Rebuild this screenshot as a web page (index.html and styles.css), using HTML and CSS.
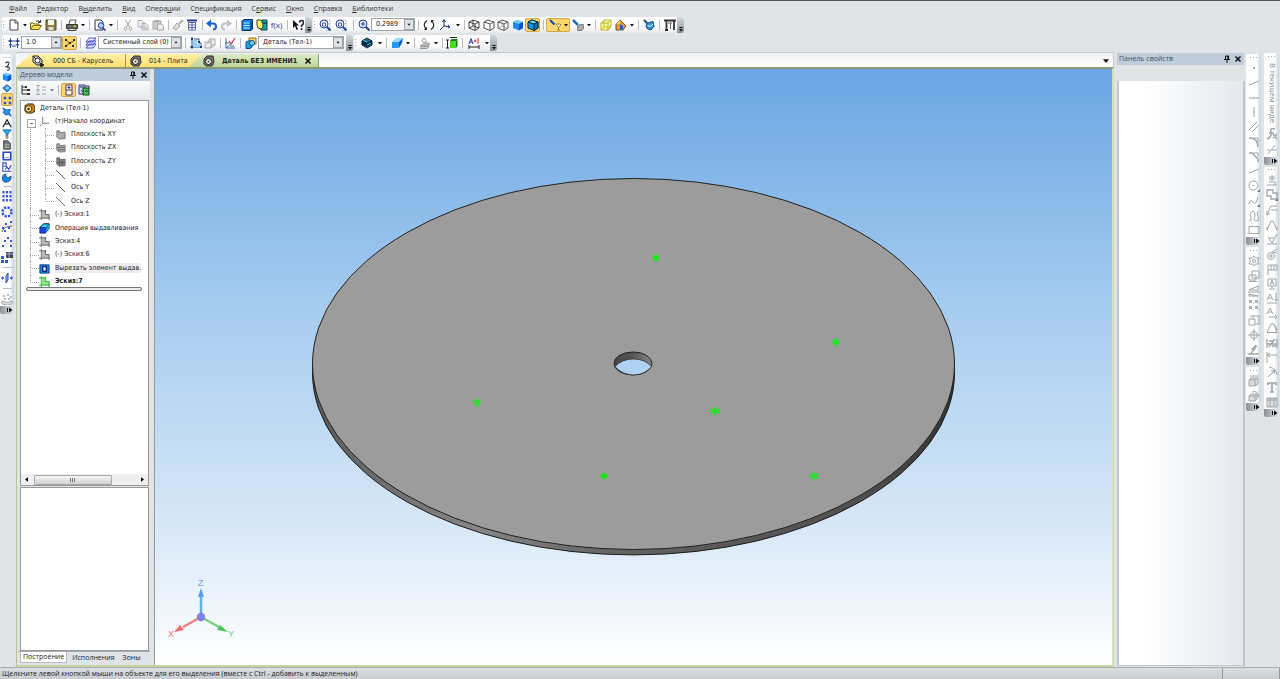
FILE: index.html
```html
<!DOCTYPE html>
<html lang="ru">
<head>
<meta charset="utf-8">
<title>Деталь БЕЗ ИМЕНИ1</title>
<link rel="stylesheet" href="styles.css">
</head>
<body>
<svg class="sprite" aria-hidden="true">
<defs>
<linearGradient id="rim" x1="0" x2="1" y1="0" y2="0"><stop offset="0" stop-color="#5a5a5a"/><stop offset=".25" stop-color="#868686"/><stop offset=".5" stop-color="#606060"/><stop offset=".85" stop-color="#505050"/><stop offset="1" stop-color="#333"/></linearGradient>
<linearGradient id="bore" x1="0" x2="1" y1="0" y2="0"><stop offset="0" stop-color="#444"/><stop offset=".5" stop-color="#565656"/><stop offset="1" stop-color="#888"/></linearGradient>
</defs>
<symbol id="caret" viewBox="0 0 6 12"><path d="M1 5h4L3 7.500z" fill="#111"/></symbol>
<symbol id="over" viewBox="0 0 6 16"><path d="M1.500 10.500h3" stroke="#111"/><path d="M1 12h4L3 14.500z" fill="#111"/></symbol>
<symbol id="overh" viewBox="0 0 14 8"><path d="M7.500 2v4" stroke="#111"/><path d="M9 1.500v5L12.500 4z" fill="#111"/></symbol>
<symbol id="new" viewBox="0 0 12 12"><path d="M2 1h5.500L10 3.500V11H2z" fill="#fff" stroke="#444"/><path d="M7 1v3h3" fill="none" stroke="#444"/></symbol>
<symbol id="open" viewBox="0 0 12 12"><path d="M.5 10V4h3l1 1H9v1.500" fill="#ffe873" stroke="#776a13"/><path d="M.5 10.500l2.500-4h8.500L9 10.500z" fill="#f8df55" stroke="#776a13"/><path d="M6 2.500q2-2 4 .5M10.500 1v2.500H8" fill="none" stroke="#333"/></symbol>
<symbol id="save" viewBox="0 0 12 12"><path d="M1 1h10v10H1z" fill="#92803c" stroke="#51471f"/><path d="M3 1h6v5H3z" fill="#f6f3e8"/><path d="M3.500 8h5v3h-5z" fill="#ddd"/></symbol>
<symbol id="print" viewBox="0 0 12 12"><path d="M3 5l1-4h6L9 5" fill="#fff" stroke="#555"/><path d="M.5 5.500h11v4H.500z" fill="#6d6c5d" stroke="#333"/><path d="M2 9.500h8v2H2z" fill="#ddd" stroke="#444"/><path d="M8 7h2" stroke="#ff0"/></symbol>
<symbol id="preview" viewBox="0 0 12 12"><path d="M1 1h6l2 2v8H1z" fill="#fff" stroke="#334"/><circle cx="7" cy="6.500" r="2.800" fill="#a8d2ff" stroke="#1c3ca5"/><path d="M9 9l2.500 2.500" stroke="#1c3ca5" stroke-width="1.500"/></symbol>
<symbol id="cut" viewBox="0 0 12 12"><path d="M3.500 1l4 7M8.500 1l-4 7" stroke="#a6a8aa"/><circle cx="3.500" cy="9.500" r="1.500" fill="none" stroke="#a6a8aa"/><circle cx="8.500" cy="9.500" r="1.500" fill="none" stroke="#a6a8aa"/></symbol>
<symbol id="copy" viewBox="0 0 12 12"><path d="M1 1.500h4l2 2V8H1zM5 4.500h4l2 2V11H5z" fill="#eee" stroke="#adafb1"/><path d="M6.500 8h3M6.500 9.500h3" stroke="#bbb"/></symbol>
<symbol id="paste" viewBox="0 0 12 12"><path d="M1 2h8v8H1z" fill="#ccc" stroke="#a6a8aa"/><path d="M3 1h4v2H3z" fill="#aaa"/><path d="M5.500 5h4l2 2v4h-6z" fill="#eee" stroke="#a6a8aa"/></symbol>
<symbol id="brush" viewBox="0 0 12 12"><path d="M11 1L7 5" stroke="#a6a8aa" stroke-width="2"/><path d="M5 4l3 3-4 4-3-2z" fill="#ddd" stroke="#a6a8aa"/></symbol>
<symbol id="props" viewBox="0 0 12 12"><path d="M1 1.500h10" stroke="#273ba5" stroke-width="2"/><path d="M2.500 3.500h7V11h-7z" fill="#fff" stroke="#5262b5"/><path d="M3 6h6M3 8.500h6M6 4v7" stroke="#5262b5"/></symbol>
<symbol id="undo" viewBox="0 0 12 12"><path d="M3 4.500h4q3 0 3 3t-3 3" fill="none" stroke="#1d5fd6" stroke-width="2"/><path d="M0 4.500L5 .5v8z" fill="#1d5fd6"/></symbol>
<symbol id="redo" viewBox="0 0 12 12"><path d="M9 4.500H5q-3 0-3 3t3 3" fill="none" stroke="#bfc1c4" stroke-width="2"/><path d="M12 4.500L7 .5v8z" fill="#bfc1c4"/></symbol>
<symbol id="calc" viewBox="0 0 12 12"><path d="M1 2l2-1.500h8.500V10L10 11.500H1z" fill="#1182e8" stroke="#062a66"/><path d="M2.500 4h6M2.500 6.500h6M2.500 9h6" stroke="#b8f0ff"/><path d="M10 2.500V11" stroke="#062a66"/></symbol>
<symbol id="lib" viewBox="0 0 12 12"><path d="M5 4h6v7H5z" fill="#15a8ad" stroke="#063f4b"/><path d="M1 1h4l2 2v4q0 3-2 3-4 0-4-4z" fill="#fff36b" stroke="#3e3a0c"/><path d="M6 1h5v3H6z" fill="#15a8ad" stroke="#063f4b"/></symbol>
<symbol id="help" viewBox="0 0 12 12"><path d="M1 1v8l2-2 1.500 4 1.500-.7L4.500 6.500H7z" fill="#111"/><path d="M7.500 3.500q0-2 2-2t2 2-2 3v1.500M9.500 9v2" fill="none" stroke="#224" stroke-width="1.500"/></symbol>
<symbol id="zoomall" viewBox="0 0 12 12"><path d="M6 1h5v10H6" fill="#fff" stroke="#999" stroke-dasharray="1"/><circle cx="5" cy="5" r="4" fill="#e2eefd" stroke="#23409c"/><path d="M3.500 4h3v3h-3z" fill="#fff" stroke="#23409c" stroke-width=".800"/><path d="M8 8l3.500 3.500" stroke="#23409c" stroke-width="2"/></symbol>
<symbol id="zoom" viewBox="0 0 12 12"><circle cx="5" cy="5" r="4" fill="#e2eefd" stroke="#23409c"/><path d="M3 5h4M5 3v4" stroke="#23409c"/><path d="M8 8l3.500 3.500" stroke="#23409c" stroke-width="2"/></symbol>
<symbol id="rotate" viewBox="0 0 12 12"><path d="M4 1.500Q-1 5 3 10M8 10.500Q13 7 9 2" fill="none" stroke="#222" stroke-width="1.200"/><path d="M4 11H1l3-3zM8 1h3L8 4z" fill="#222"/></symbol>
<symbol id="axes" viewBox="0 0 12 12"><path d="M5 7V1M5 7l6 1M5 7l-4 4M3.500 3L5 .5 6.500 3M9 6l2 2-2 1" fill="none" stroke="#26337a"/></symbol>
<symbol id="wire" viewBox="0 0 12 12"><path d="M1 3l4-2 6 2v6l-4 2.500L1 9zM1 3l6 2 4-2M7 5v6M5 1v6l6 2M5 7L1 9" fill="none" stroke="#333" stroke-width=".900"/></symbol>
<symbol id="hollow" viewBox="0 0 12 12"><path d="M1 3l4-2 6 2v6l-4 2.500L1 9zM1 3l6 2 4-2M7 5v6" fill="#fff" stroke="#444" stroke-width=".900"/></symbol>
<symbol id="thin" viewBox="0 0 12 12"><path d="M1 3l4-2 6 2v6l-4 2.500L1 9zM1 3l6 2 4-2M7 5v6" fill="#fff" stroke="#444" stroke-width=".900"/><path d="M5 2v5l5 2M5 7L1 9" fill="none" stroke="#888" stroke-width=".700"/></symbol>
<symbol id="solid" viewBox="0 0 12 12"><path d="M1 3l4-2 6 2v6l-4 2.500L1 9z" fill="#1b8cf0"/><path d="M1 3l4-2 6 2-4 2z" fill="#74c8ff"/><path d="M7 5l4-2v6l-4 2.500z" fill="#0c56c8"/></symbol>
<symbol id="solidb" viewBox="0 0 12 12"><path d="M1 3l4-2 6 2v6l-4 2.500L1 9z" fill="#1796dc" stroke="#062b42"/><path d="M1 3l4-2 6 2-4 2z" fill="#74d9f5" stroke="#062b42"/><path d="M7 5l4-2v6l-4 2.500z" fill="#0873b8" stroke="#062b42"/></symbol>
<symbol id="filter" viewBox="0 0 12 12"><path d="M1 1l4.500 4.500" stroke="#234b99" stroke-width="2.200"/><path d="M7.500 5h4v1.500L9.500 8.500l-2-2zM9.500 8v3M8 11h3" fill="#fff3b0" stroke="#866e38" stroke-width=".800"/></symbol>
<symbol id="pick" viewBox="0 0 12 12"><path d="M1 1l5 5" stroke="#246bc4" stroke-width="2.500"/><path d="M5.500 7l2-1.500H11.500v4L10 11.500H5.500z" fill="#aaa" stroke="#888"/></symbol>
<symbol id="ybox" viewBox="0 0 12 12"><path d="M1 4l3-3h7v7l-3 3H1zM1 4h7v7M8 4l3-3M4 1v7h7M4 8l-3 3" fill="#fdfda0" stroke="#b8b91c"/></symbol>
<symbol id="section" viewBox="0 0 12 12"><path d="M1 11V5l4-4 6 6-3 4z" fill="#ef982a" stroke="#775019"/><path d="M5 5l3 2v3l-3 1z" fill="#2258d6"/><path d="M1 5l4-4v4z" fill="#ffd46b"/></symbol>
<symbol id="rebuild" viewBox="0 0 12 12"><path d="M1 1l4 4" stroke="#1c4c81" stroke-width="2"/><path d="M3 6l3-2.500 4-1 1 5-3 3.500-4-1.500z" fill="#2898e1" stroke="#1c4c81"/><path d="M4.500 6.500l2.500 1 3-2.500" fill="none" stroke="#e9f8ff"/></symbol>
<symbol id="crane" viewBox="0 0 12 12"><path d="M0 1.500h12M2.500 2v9M1 11h3M10 2v9" fill="none" stroke="#333" stroke-width="1.800"/><path d="M4 4h4M6.500 4v6" fill="none" stroke="#666"/></symbol>
<symbol id="snap" viewBox="0 0 12 12"><path d="M2.500 1v10M9.500 1v10M0 4h12M4 9h4M1 7l1.500 2L4 7M8 7l1.500 2L11 7" fill="none" stroke="#3053a0"/><path d="M1.500 3h2v2h-2zM8.500 3h2v2h-2z" fill="#26337a"/></symbol>
<symbol id="points" viewBox="0 0 12 12"><path d="M1 9.500l5-3.500 5-3M2 3l3 2.500" stroke="#7b5d12"/><path d="M1 2h2v2H1zM5 5h2v2H5zM9 2h2v2H9zM8 8h2v2H8zM1 8h2v2H1z" fill="#30301b"/></symbol>
<symbol id="layers" viewBox="0 0 12 12"><path d="M1 11l3-4h7l-3 4zM1 8l3-4h7L8 8zM1 5l3-4h7L8 5z" fill="#e8eaff" stroke="#4a50cb"/></symbol>
<symbol id="sketch" viewBox="0 0 12 12"><path d="M2 0v12M0 10h12M4 2h5v4h2v4" fill="none" stroke="#1c539c"/><path d="M3 3h4v4h4v3H3z" fill="#9bd3ef"/><path d="M1 1h2v2H1zM8 4h2v2H8zM1 9h2v2H1zM10 9h2v2h-2z" fill="#143b7c"/></symbol>
<symbol id="gsketch" viewBox="0 0 12 12"><path d="M1 5h6v6H1zM5 2h6v6H7M4 5l2-3M7 11l4-3M3 7l5-4" fill="#eee" stroke="#a6a8aa"/></symbol>
<symbol id="check" viewBox="0 0 12 12"><path d="M2 1v10h9M2 11l7-6" fill="none" stroke="#4361bd"/><path d="M5 4l2 3 4-6" fill="none" stroke="#d03b74" stroke-width="1.300"/><path d="M1 6h4M6 9h4" stroke="#268a4b"/></symbol>
<symbol id="assembly" viewBox="0 0 12 12"><path d="M4 1h7v6H4z" fill="#ffd65c" stroke="#9a681a"/><path d="M1 5l2-1h4v6l-2 1.500H1z" fill="#229fe3" stroke="#07508b"/><circle cx="7" cy="6" r="2.500" fill="#79d7f0" stroke="#07508b"/></symbol>
<symbol id="stripe" viewBox="0 0 12 12"><path d="M1 4l5-3 5 3v4l-5 3-5-3z" fill="#176b89" stroke="#062641"/><path d="M1 4l5 3 5-3M1 6l5 3 5-3" fill="none" stroke="#111b42" stroke-width="1.500"/><path d="M2 3l4 2M6 8l4-2" stroke="#30d0d0"/></symbol>
<symbol id="extr" viewBox="0 0 12 12"><path d="M1 5h7v6H1z" fill="#2898f2"/><path d="M1 5l4-4h7L8 5z" fill="#9ad9ff"/><path d="M8 5l4-4-1 5-3 5z" fill="#0a5fc0"/></symbol>
<symbol id="gsurf" viewBox="0 0 12 12"><circle cx="5" cy="3.500" r="2" fill="none" stroke="#999"/><path d="M5 6h5M1 9l3-2h7l-2 2zM1 11.500l2-2h7l-2 2z" fill="#ccc" stroke="#999"/></symbol>
<symbol id="dimbox" viewBox="0 0 12 12"><path d="M4 4h6v7H4z" fill="#3fe010"/><path d="M10 4l1.500-2v7L10 11z" fill="#1a7a08"/><path d="M4 4l1.500-2h6L10 4z" fill="#1a7a08"/><path d="M1.500 3v8M0 3h3M0 11h3M4 .5h7" stroke="#222"/></symbol>
<symbol id="measure" viewBox="0 0 12 12"><path d="M1 7l2-5.500L5 7M2 5h2" fill="none" stroke="#203fba"/><path d="M6 4h2.500M7 2.500v3M10 1v6" stroke="#e63030"/><path d="M1 8v4M11 8v4M1 10h10" stroke="#222"/></symbol>
<symbol id="gear" viewBox="0 0 12 12"><path d="M1 4l3-3h6l1 6-2 4H3L1 9z" fill="#77756d" stroke="#2e2e2a"/><circle cx="5.500" cy="6.500" r="3" fill="#f4f2e4" stroke="#222"/><circle cx="5.500" cy="6.500" r="1" fill="#444"/></symbol>
<symbol id="ygear" viewBox="0 0 12 12"><path d="M1 3l3-2h6l2 3v5l-3 2H3L1 9z" fill="#bb842c" stroke="#3b270c"/><circle cx="5" cy="6.500" r="3.500" fill="#ffe18c" stroke="#4f3511"/><circle cx="5" cy="6.500" r="1.300" fill="#3a2b14"/></symbol>
<symbol id="asm" viewBox="0 0 12 12"><path d="M1 1h5l4 4v5H5L1 7z" fill="#ddd" stroke="#222"/><circle cx="5.500" cy="5.500" r="2.500" fill="#fff" stroke="#222"/><path d="M8 8l4 2-3 2zM1 1l3 3" fill="#222" stroke="#222"/></symbol>
<symbol id="pin" viewBox="0 0 8 8"><path d="M2.500 1h3v3.500h-3zM1 4.500h6M4 5v3" fill="none" stroke="#111"/><path d="M5 1v4" stroke="#111" stroke-width="1.500"/></symbol>
<symbol id="close" viewBox="0 0 8 8"><path d="M1.500 1.500l5 5M6.500 1.500l-5 5" stroke="#111" stroke-width="1.500"/></symbol>
<symbol id="tree" viewBox="0 0 12 12"><path d="M2 1v9h5M2 3h3M2 6h5" fill="none" stroke="#333"/><path d="M5 2h2v2H5zM7 5h3v2H7zM7 9h3v2H7z" fill="#333"/></symbol>
<symbol id="gtree" viewBox="0 0 12 12"><path d="M1 1.500h4M1 6h4M1 10.500h4M7 3h4M7 6h4M7 10h4M3 2v9" stroke="#aaa"/></symbol>
<symbol id="doc" viewBox="0 0 12 12"><path d="M3 1h6v10H3z" fill="#fff6c8" stroke="#443c9b"/><path d="M3 6h6M5 3h2v1H5z" fill="#443c9b" stroke="#443c9b"/></symbol>
<symbol id="docs" viewBox="0 0 12 12"><path d="M1 1h6v9H1z" fill="#d0d8ff" stroke="#223b8b"/><path d="M5 4h6v7H5z" fill="#46bd4d" stroke="#173d2a"/><path d="M2 3h4M7 2h4v2M3 6l2 2M7 7h3" fill="none" stroke="#173d2a"/></symbol>
<symbol id="origin" viewBox="0 0 12 12"><path d="M4 1v7h7M4 8l-3 3" fill="none" stroke="#777"/></symbol>
<symbol id="plane" viewBox="0 0 12 12"><path d="M2 2h3v2l6-.5v7l-6 .5-3-2z" fill="#aaa" stroke="#777"/></symbol>
<symbol id="planeh" viewBox="0 0 12 12"><path d="M2 2h3v2l6-.5v7l-6 .5-3-2z" fill="#aaa" stroke="#777"/><path d="M2 6h9M3 8.500h8" stroke="#666"/></symbol>
<symbol id="planev" viewBox="0 0 12 12"><path d="M2 2h3v2l6-.5v7l-6 .5-3-2z" fill="#888" stroke="#666"/><path d="M5 3v8M8 4v7M2 7h9" stroke="#555"/></symbol>
<symbol id="axis" viewBox="0 0 12 12"><path d="M1 1l10 10" stroke="#555"/></symbol>
<symbol id="tsk" viewBox="0 0 12 12"><path d="M3 2h4v4h4v4H3z" fill="#b8b8b8"/><path d="M2.500 0v12M0 2h8M7 1v5h4v6M0 10h12" fill="none" stroke="#666"/></symbol>
<symbol id="tskg" viewBox="0 0 12 12"><path d="M3 2h4v4h4v4H3z" fill="#8eea84"/><path d="M2.500 0v12M0 2h8M7 1v5h4v6M0 10h12" fill="none" stroke="#30a33a"/></symbol>
<symbol id="boss" viewBox="0 0 12 12"><path d="M1 5l4-4h6v5l-4 5H1z" fill="#1c48df" stroke="#0b2a76"/><path d="M1 5l4-4h6L8 5z" fill="#35d8ea" stroke="#0b2a76"/><path d="M8 5l3-4v5l-3 4z" fill="#0fa9d0"/></symbol>
<symbol id="cutx" viewBox="0 0 12 12"><path d="M1 2h10v9H1z" fill="#158ee6" stroke="#0a2d86"/><path d="M4 4h4v5H4z" fill="#e8f8ff" stroke="#0a2d86" stroke-width="1.500"/></symbol>
<symbol id="curve" viewBox="0 0 12 12"><path d="M4 2q6-2 4 2T5 7q6 0 3 4H6" fill="none" stroke="#333" stroke-width="1.300"/></symbol>
<symbol id="patch" viewBox="0 0 12 12"><path d="M1 6l5-4 5 4-5 5z" fill="#2f8df0" stroke="#1851a7"/><path d="M4 6l3-2 2 2-3 2z" fill="#9ad6ff"/></symbol>
<symbol id="four" viewBox="0 0 12 12"><path d="M2 2h3v3H2zM8 2h3v3H8zM2 8h3v3H2zM8 8h3v3H8z" fill="#294ed0"/></symbol>
<symbol id="fly" viewBox="0 0 12 12"><path d="M1 1l4 2.500 5-.5-1 4 2 4-3-2-4 .5L1 6l2-1z" fill="#2696ee" stroke="#1b57b1"/></symbol>
<symbol id="compass" viewBox="0 0 12 12"><path d="M1 11l5-9 5 9M4 7h4" fill="none" stroke="#222" stroke-width="1.400"/></symbol>
<symbol id="funnel" viewBox="0 0 12 12"><path d="M1 1h10L7 6v5H5V6z" fill="#21aaf2" stroke="#1c69b1"/><path d="M5 8h2v3H5z" fill="#ff8a1f"/></symbol>
<symbol id="sheet" viewBox="0 0 12 12"><path d="M2 1h5l3 3v7H2z" fill="#777" stroke="#333"/><path d="M3 6h6M3 9h6" stroke="#ccc"/></symbol>
<symbol id="frame" viewBox="0 0 12 12"><path d="M1.500 1.500h9v9h-9z" fill="#fff" stroke="#2948bc" stroke-width="2"/><path d="M3 8h6" stroke="#78a"/></symbol>
<symbol id="graph" viewBox="0 0 12 12"><path d="M1 1h4v4H1zM1 6v5h10M4 9l2-3 2 3 3-5" fill="none" stroke="#2948bc" stroke-width="1.300"/></symbol>
<symbol id="blob" viewBox="0 0 12 12"><path d="M1 3l3-2 2 5 5-2q0 7-6 7T1 3z" fill="#1886e1" stroke="#17418a"/></symbol>
<symbol id="grid9" viewBox="0 0 12 12"><path d="M2.500 0v12M6 0v12M9.500 0v12" stroke="#3358e0" stroke-width="2.200" stroke-dasharray="2.500 1.500"/></symbol>
<symbol id="ring" viewBox="0 0 12 12"><circle cx="6" cy="6" r="4.500" fill="none" stroke="#3358e0" stroke-width="2.400" stroke-dasharray="2.300 1.230"/></symbol>
<symbol id="path3" viewBox="0 0 12 12"><path d="M1 11q2-6 10-6" fill="none" stroke="#555"/><path d="M1 6h2v2H1zM4 2h2v2H4zM9 0h2v2H9zM3 9h2v2H3zM7 6h2v2H7z" fill="#3358e0"/></symbol>
<symbol id="scatter" viewBox="0 0 12 12"><path d="M1 9h2v2H1zM3 4h2v2H3zM6 1h2v2H6zM9 4h2v2H9zM9 9h2v2H9z" fill="#3358e0"/></symbol>
<symbol id="tabpat" viewBox="0 0 12 12"><path d="M5 1h7v6H5z" fill="#446"/><path d="M5 3h7M8 1v6" stroke="#aac"/><path d="M0 5h3v3H0zM0 9h3v3H0zM4 9h3v3H4z" fill="#3358e0"/></symbol>
<symbol id="mirror" viewBox="0 0 12 12"><path d="M5 4l2-3v7l-2 3z" fill="#8fc0ff" stroke="#2948bc"/><path d="M1 6h2M9 6h2" stroke="#3358e0" stroke-width="1.500"/><path d="M2 4v4L0 6zM10 4v4l2-2z" fill="#3358e0"/></symbol>
<symbol id="gdots" viewBox="0 0 12 12"><path d="M1 8q5 3 10 0v3q-5 2-10 0z" fill="#ddd" stroke="#aaa"/><path d="M2 2h2v2H2zM6 1h2v2H6zM9 3h2v2H9zM3 5h2v2H3zM7 5h2v2H7z" fill="#bbb"/></symbol>
<symbol id="g-dot" viewBox="0 0 12 12"><path d="M5 5h2v2H5z" fill="#aaa" stroke="none"/></symbol>
<symbol id="g-line" viewBox="0 0 12 12"><path d="M1 8l10-4"/></symbol>
<symbol id="g-h" viewBox="0 0 12 12"><path d="M1 6h10M6 5v2"/></symbol>
<symbol id="g-v" viewBox="0 0 12 12"><path d="M6 1v10M5 6h2"/></symbol>
<symbol id="g-par" viewBox="0 0 12 12"><path d="M1 9l8-8M4 11l7-7"/></symbol>
<symbol id="g-arc" viewBox="0 0 12 12"><path d="M1 2q9 0 9 9" stroke-width="1.500"/><path d="M5 2h5v4"/></symbol>
<symbol id="g-cham" viewBox="0 0 12 12"><path d="M1 2h3l6 6v3" stroke-width="1.500"/><path d="M5 2h5v4"/></symbol>
<symbol id="g-circ" viewBox="0 0 12 12"><circle cx="5.500" cy="5.500" r="4.500"/><path d="M4.500 5.500h2"/><path d="M12 9v3H9z" fill="#777" stroke="none"/></symbol>
<symbol id="g-spl" viewBox="0 0 12 12"><path d="M1 9q1-6 4-2t5-5"/><path d="M12 9v3H9z" fill="#777" stroke="none"/></symbol>
<symbol id="g-loop" viewBox="0 0 12 12"><path d="M1 10.500q3 0 2-3t0-5q2.500-3 3.500 0 1 3 0 5t1 3.500q3 .5 3-2t-1-4 1-4"/></symbol>
<symbol id="g-rect" viewBox="0 0 12 12"><path d="M1 2.500h10v7H1z"/></symbol>
<symbol id="g-gear" viewBox="0 0 12 12"><path d="M6 1l1.500 2H11L9.500 6 11 9H7.500L6 11 4.500 9H1l1.500-3L1 3h3.500z"/><circle cx="6" cy="6" r="1.500"/></symbol>
<symbol id="g-sq2" viewBox="0 0 12 12"><path d="M4 1h7v7H4zM1 5h7v5H1z"/><path d="M1 11.500h8"/></symbol>
<symbol id="g-view" viewBox="0 0 12 12"><path d="M1 1h6v3h4v6H5V7H1z" stroke-width="1.300"/><path d="M12 9v3H9z" fill="#777" stroke="none"/></symbol>
<symbol id="g-mir" viewBox="0 0 12 12"><path d="M1 5h9V1zM0 7h12M1 9l9 2H1z"/></symbol>
<symbol id="g-blk" viewBox="0 0 12 12"><path d="M1.500 1.500h2v2h-2zM7.500 1.500h2v2h-2zM1.500 7.500h2v2h-2zM7.500 7.500h2v2h-2z" fill="#ccc"/><path d="M5 4.500h1M5 10.500h1M11 4.500h1M11 10.500h1"/></symbol>
<symbol id="g-rot" viewBox="0 0 12 12"><path d="M1 5h6v6H1zM5 5V2h6v8H7M2 3l3-2"/></symbol>
<symbol id="g-targ" viewBox="0 0 12 12"><circle cx="6" cy="6" r="3.500"/><path d="M6 0v12M0 6h12"/></symbol>
<symbol id="g-bolt" viewBox="0 0 12 12"><path d="M8 1L4 5h3L2 10M0 10h11M9 2L6 4" stroke-width="1.300"/></symbol>
<symbol id="g-cube" viewBox="0 0 12 12"><path d="M1 5h6v6H1zM1 5l2-2h7v6l-3 2M7 5l3-2M2 1h9" fill="#ddd"/></symbol>
<symbol id="g-rcube" viewBox="0 0 12 12"><path d="M1 6h6v5H1zM1 6l2-2h6v5l-2 2M7 6l2-2" fill="#ddd"/><path d="M4 2q6-2 7 5M9.500 5.500L11 7"/></symbol>
<symbol id="g-fx" viewBox="0 0 12 12"><path d="M1 11Q6 9 5 4T9 1M3 5h5M7 6l4 5M11 6L7 10" stroke-width="1.500"/></symbol>
<symbol id="g-tan" viewBox="0 0 12 12"><path d="M1 7h3M6 7h5M2 11l7-9"/></symbol>
<symbol id="g-base" viewBox="0 0 12 12"><path d="M1 11h10M3 8h6v3M6 1v6M3 3h6M3 5h6"/></symbol>
<symbol id="g-abox" viewBox="0 0 12 12"><path d="M2 1h8v7H2zM4 7l2-5 2 5M5 5h2M6 8v2M3 11h6"/></symbol>
<symbol id="g-lead" viewBox="0 0 12 12"><path d="M1 11l4-9h6M5 6h6M1 7v4l3-2"/></symbol>
<symbol id="g-tri" viewBox="0 0 12 12"><path d="M1 11l4-9h2l4 9M1 8v3M11 8v3"/></symbol>
<symbol id="g-ang" viewBox="0 0 12 12"><path d="M1 10.500L5 2h3l3 8.500zM7 2q4 2 4 7"/></symbol>
<symbol id="g-chk" viewBox="0 0 12 12"><path d="M2 4l4 6 5-9M3 5h5M1 11h10"/></symbol>
<symbol id="g-stamp" viewBox="0 0 12 12"><circle cx="5" cy="8" r="3.500"/><path d="M3 8h4M5 6v4M6 4l5-3M6 5l5-1"/></symbol>
<symbol id="g-flag" viewBox="0 0 12 12"><path d="M2 12V2h9v5H2M5 2v5M8 2v5"/></symbol>
<symbol id="g-a" viewBox="0 0 12 12"><path d="M1 8l3-6 3 6M2 6h4M10 1v8M8.500 7L10 9l1.500-2M1 11h10"/></symbol>
<symbol id="g-aa" viewBox="0 0 12 12"><path d="M1 7l3-6 3 6M2 5h4M3 10h8M9 8l2 2-2 2"/></symbol>
<symbol id="g-lin" viewBox="0 0 12 12"><path d="M1 1v11M1 4h10M4 2L1 4l3 2"/></symbol>
<symbol id="g-rad" viewBox="0 0 12 12"><path d="M3 1q7 1 8 8M2 11l7-7M5 5l4-1-1 4"/></symbol>
<symbol id="g-t" viewBox="0 0 12 12"><path d="M2 4V2h8v2M6 2v9M4 11h4" stroke-width="1.700"/></symbol>
<symbol id="g-tab" viewBox="0 0 12 12"><path d="M1 2h10v9H1zM1 4h10M4 2v9M8 2v9" fill="#ddd"/></symbol>
<symbol id="g-dim" viewBox="0 0 12 12"><path d="M1 2v9M11 2v9M1 7h10M3 10l6-8M3 4h4M6 9h4" stroke-width="1.300"/></symbol>
</svg>

<header class="top">
<nav class="menu" aria-label="Главное меню"><a href="#"><u>Ф</u>айл</a><a href="#"><u>Р</u>едактор</a><a href="#">В<u>ы</u>делить</a><a href="#"><u>В</u>ид</a><a href="#">Опера<u>ц</u>ии</a><a href="#">С<u>п</u>ецификация</a><a href="#">С<u>е</u>рвис</a><a href="#"><u>О</u>кно</a><a href="#"><u>С</u>правка</a><a href="#"><u>Б</u>иблиотеки</a></nav>
<div class="row">
<div class="bar"><i class="grip"></i>
<button aria-label="Создать"><svg><use href="#new"/></svg></button><button class="dd" aria-label="Варианты"><svg><use href="#caret"/></svg></button><button aria-label="Открыть"><svg><use href="#open"/></svg></button><button aria-label="Сохранить"><svg><use href="#save"/></svg></button><i class="sep"></i>
<button aria-label="Печать"><svg><use href="#print"/></svg></button><button class="dd" aria-label="Варианты печати"><svg><use href="#caret"/></svg></button><i class="sep"></i>
<button aria-label="Просмотр"><svg><use href="#preview"/></svg></button><button class="dd" aria-label="Варианты просмотра"><svg><use href="#caret"/></svg></button><i class="sep"></i>
<button aria-label="Вырезать"><svg><use href="#cut"/></svg></button><button aria-label="Копировать"><svg><use href="#copy"/></svg></button><button aria-label="Вставить"><svg><use href="#paste"/></svg></button><i class="sep"></i>
<button class="slim" aria-label="Копировать свойства"><svg><use href="#brush"/></svg></button><button class="slim" aria-label="Свойства"><svg><use href="#props"/></svg></button><i class="sep"></i>
<button class="slim" aria-label="Отменить"><svg><use href="#undo"/></svg></button><button class="slim" aria-label="Повторить"><svg><use href="#redo"/></svg></button><i class="sep"></i>
<button aria-label="Переменные"><svg><use href="#calc"/></svg></button><button aria-label="Менеджер библиотек"><svg><use href="#lib"/></svg></button><button class="fx">f(x)</button><i class="sep"></i><button aria-label="Справка"><svg><use href="#help"/></svg></button><button class="more" aria-label="Другие кнопки"><svg><use href="#over"/></svg></button></div>
<div class="bar"><i class="grip"></i>
<button aria-label="Показать все"><svg><use href="#zoomall"/></svg></button><button class="wide" aria-label="Увеличить рамкой"><svg><use href="#zoomall"/></svg></button><i class="sep"></i><button aria-label="Масштаб"><svg><use href="#zoom"/></svg></button><span class="combo zoomc"><select aria-label="Текущий масштаб"><option>0.2989</option></select><svg><use href="#caret"/></svg></span><i class="sep"></i>
<button aria-label="Повернуть"><svg><use href="#rotate"/></svg></button><button class="wide" aria-label="Ориентация"><svg><use href="#axes"/></svg></button><button class="dd" aria-label="Варианты ориентации"><svg><use href="#caret"/></svg></button><i class="sep"></i>
<button class="slim" aria-label="Каркас"><svg><use href="#wire"/></svg></button><button aria-label="Без невидимых линий"><svg><use href="#hollow"/></svg></button><button class="slim" aria-label="Невидимые линии тонкие"><svg><use href="#thin"/></svg></button><button aria-label="Полутоновое"><svg><use href="#solid"/></svg></button><button class="on" aria-label="Полутоновое с каркасом"><svg><use href="#solidb"/></svg></button><i class="sep"></i>
<span class="on pair"><button aria-label="Фильтр"><svg><use href="#filter"/></svg></button><button class="dd" aria-label="Варианты фильтра"><svg><use href="#caret"/></svg></button></span>
<button aria-label="Выбор граней"><svg><use href="#pick"/></svg></button><button class="dd" aria-label="Варианты выбора"><svg><use href="#caret"/></svg></button><i class="sep"></i>
<button aria-label="Упрощенное отображение"><svg><use href="#ybox"/></svg></button><button aria-label="Сечение"><svg><use href="#section"/></svg></button><button class="dd" aria-label="Варианты сечения"><svg><use href="#caret"/></svg></button><i class="sep"></i>
<button aria-label="Перестроить"><svg><use href="#rebuild"/></svg></button><i class="sep"></i><button aria-label="Измерения"><svg><use href="#crane"/></svg></button><button class="more" aria-label="Другие кнопки"><svg><use href="#over"/></svg></button></div>
</div>
<div class="row">
<div class="bar"><i class="grip"></i>
<button aria-label="Шаг курсора"><svg><use href="#snap"/></svg></button><span class="combo stepc"><select aria-label="Текущий шаг курсора"><option>1.0</option></select><svg><use href="#caret"/></svg></span><button class="on" aria-label="Привязки"><svg><use href="#points"/></svg></button><i class="sep"></i>
<button aria-label="Слои"><svg><use href="#layers"/></svg></button><span class="combo layerc"><select aria-label="Текущий слой"><option>Системный слой (0)</option></select><svg><use href="#caret"/></svg></span><i class="sep"></i>
<button aria-label="Эскиз"><svg><use href="#sketch"/></svg></button><button class="slim" aria-label="Разместить эскиз"><svg><use href="#gsketch"/></svg></button><i class="sep"></i><button class="slim" aria-label="Проверка"><svg><use href="#check"/></svg></button><i class="sep"></i>
<button aria-label="Деталь"><svg><use href="#assembly"/></svg></button><span class="combo partc"><select aria-label="Текущая деталь"><option>Деталь (Тел-1)</option></select><svg><use href="#caret"/></svg></span><button class="more gapl" aria-label="Другие кнопки"><svg><use href="#over"/></svg></button></div>
<div class="bar"><i class="grip"></i>
<button class="wide" aria-label="Материал"><svg><use href="#stripe"/></svg></button><button class="dd" aria-label="Варианты материала"><svg><use href="#caret"/></svg></button><i class="sep"></i><button aria-label="Выдавливание"><svg><use href="#extr"/></svg></button><button class="dd" aria-label="Варианты операции"><svg><use href="#caret"/></svg></button><i class="sep"></i>
<button aria-label="Поверхность"><svg><use href="#gsurf"/></svg></button><button class="dd" aria-label="Варианты поверхности"><svg><use href="#caret"/></svg></button><i class="sep"></i><button class="slim" aria-label="Габарит"><svg><use href="#dimbox"/></svg></button><i class="sep"></i>
<button class="wide" aria-label="Размеры"><svg><use href="#measure"/></svg></button><button class="dd" aria-label="Варианты размеров"><svg><use href="#caret"/></svg></button><button class="more" aria-label="Другие кнопки"><svg><use href="#over"/></svg></button></div>
</div>
</header>

<main class="work">
<aside class="leftcol"><div class="vbar leftbar"><i class="vgrip"></i>
<div class="tight"><button aria-label="Кривые"><svg><use href="#curve"/></svg></button><button aria-label="Тело"><svg><use href="#solid"/></svg></button><button aria-label="Поверхности"><svg><use href="#patch"/></svg></button><button class="on" aria-label="Массивы"><svg><use href="#four"/></svg></button><button aria-label="Вспомогательная геометрия"><svg><use href="#fly"/></svg></button><button aria-label="Измерения"><svg><use href="#compass"/></svg></button><button aria-label="Фильтры"><svg><use href="#funnel"/></svg></button><button aria-label="Спецификация"><svg><use href="#sheet"/></svg></button><button aria-label="Отчеты"><svg><use href="#frame"/></svg></button><button aria-label="Оформление"><svg><use href="#graph"/></svg></button><button aria-label="Листовое тело"><svg><use href="#blob"/></svg></button></div>
<i class="hsep"></i><button aria-label="Массив по сетке"><svg><use href="#grid9"/></svg></button><button aria-label="Массив по окружности"><svg><use href="#ring"/></svg></button><button aria-label="Массив по кривой"><svg><use href="#path3"/></svg></button><button aria-label="Массив по точкам"><svg><use href="#scatter"/></svg></button><button aria-label="Массив по таблице"><svg><use href="#tabpat"/></svg></button><i class="hsep"></i><button aria-label="Зеркальный массив"><svg><use href="#mirror"/></svg></button><i class="hsep"></i><button aria-label="Размножить"><svg><use href="#gdots"/></svg></button><button class="vmore" aria-label="Другие кнопки"><svg><use href="#overh"/></svg></button></div></aside>

<section class="docs">
<div class="tabs"><button class="tab t1"><svg><use href="#asm"/></svg>000 СБ - Карусель</button><button class="tab t2"><svg><use href="#gear"/></svg>014 - Плита</button><button class="tab t3"><svg><use href="#gear"/></svg>Деталь БЕЗ ИМЕНИ1<svg class="x"><use href="#close"/></svg></button><button class="list" aria-label="Список документов"><svg viewBox="0 0 8 5"><path d="M0 0h8L4 5z" fill="#111"/></svg></button></div>
<div class="frame">
<aside class="treepanel">
<h2 class="title">Дерево модели<span></span><button aria-label="Закрепить"><svg><use href="#pin"/></svg></button><button aria-label="Закрыть"><svg><use href="#close"/></svg></button></h2>
<div class="treetools"><button aria-label="Структура"><svg><use href="#tree"/></svg></button><button aria-label="Состав"><svg><use href="#gtree"/></svg></button><button class="dd pale" aria-label="Варианты"><svg><use href="#caret"/></svg></button><i class="sep"></i><button class="on" aria-label="Раздел"><svg><use href="#doc"/></svg></button><button aria-label="Отношения"><svg><use href="#docs"/></svg></button></div>
<div class="treebox">
<ul class="tree">
<li class="root"><svg><use href="#ygear"/></svg>Деталь (Тел-1)
<ul>
<li class="open"><svg><use href="#origin"/></svg>(т)Начало координат
<ul><li><svg><use href="#plane"/></svg>Плоскость XY</li><li><svg><use href="#planeh"/></svg>Плоскость ZX</li><li><svg><use href="#planev"/></svg>Плоскость ZY</li><li><svg><use href="#axis"/></svg>Ось X</li><li><svg><use href="#axis"/></svg>Ось Y</li><li><svg><use href="#axis"/></svg>Ось Z</li></ul></li>
<li><svg><use href="#tsk"/></svg>(-) Эскиз:1</li>
<li><svg><use href="#boss"/></svg>Операция выдавливания</li>
<li><svg><use href="#tsk"/></svg>Эскиз:4</li>
<li><svg><use href="#tsk"/></svg>(-) Эскиз:6</li>
<li><svg><use href="#cutx"/></svg><mark>Вырезать элемент выдав.</mark></li>
<li><svg><use href="#tskg"/></svg><b>Эскиз:7</b></li>
</ul></li>
</ul>
<div class="endbar"></div>
<div class="scroll"><svg viewBox="0 0 4 6"><path d="M4 0v6L0 3z"/></svg><div class="track"><div class="thumb"></div></div><svg viewBox="0 0 4 6"><path d="M0 0v6l4-3z"/></svg></div>
</div>
<div class="lower"></div>
<div class="btabs"><button class="cur">Построение</button><button>Исполнения</button><button>Зоны</button></div>
</aside>
<div class="view">
<svg class="model" viewBox="155 69 957 595" preserveAspectRatio="xMinYMin meet" role="img" aria-label="Диск с отверстием">
<path d="M312.500 364a321 185 0 0 0 642 0v9a321 182 0 0 1-642 0z" fill="url(#rim)" stroke="#1c1c1c"/>
<ellipse cx="633.500" cy="364" rx="321" ry="185.500" fill="#9c9c9c" stroke="#222"/>
<ellipse cx="633" cy="363.500" rx="19" ry="11.500" fill="url(#bore)" stroke="#222"/>
<path d="M615 366.500q7-7.500 18.500-7.500t18 7.500q-6 8-18 8.500-12-.5-18.500-8.500z" fill="#b0d2f2" stroke="#333" stroke-width=".800"/>
<g stroke="#1be81b" stroke-width="1.500" fill="none">
<path d="M656 253.500v8M652 258h7M653.500 255.500l5 5M658.500 255.500l-5 5"/>
<path d="M836 338v8.500M832 342h8M833.500 339.500l5 5M838.500 339.500l-5 5"/>
<path d="M477 398v9M473 401h7.500M474 402.500l3 3M480 402.500l-3 3"/>
<path d="M715 406v10M710 409l10 4M720 409l-10 4"/>
<path d="M604 472v8M600 476h8M601.500 474l5 4M606.500 474l-5 4"/>
<path d="M814 471v10M809.500 474l9 4M818.500 474l-9 4"/></g>
<g stroke-width="2.500"><path d="M201 617v-20" stroke="#5fb0e6"/><path d="M201 617l-18 10" stroke="#ef7f80"/><path d="M201 617l18 10" stroke="#78d07e"/></g>
<path d="M201 588l3 9h-6z" fill="#5c9cf0"/><path d="M174 632l6-7 4 5z" fill="#f56a6c"/><path d="M228 632l-8-7-3 5z" fill="#48c558"/><circle cx="201" cy="617" r="4.200" fill="#7c82e6"/>
<text x="198" y="586" fill="#6ba4ef">Z</text><text x="168" y="637" fill="#f37576">X</text><text x="228" y="637" fill="#6ad374">Y</text>
</svg>
</div>
</div>
</section>

<aside class="props"><h2 class="title">Панель свойств<span></span><button aria-label="Закрепить панель"><svg><use href="#pin"/></svg></button><button aria-label="Закрыть панель"><svg><use href="#close"/></svg></button></h2><div class="propbody"></div></aside>

<aside class="rights">
<div class="vcol">
<div class="vbar"><i class="vgrip"></i><div class="set"><button aria-label="Точка"><svg><use href="#g-dot"/></svg></button><button aria-label="Отрезок"><svg><use href="#g-line"/></svg></button><button aria-label="Горизонтальная прямая"><svg><use href="#g-h"/></svg></button><button aria-label="Вертикальная прямая"><svg><use href="#g-v"/></svg></button><button aria-label="Параллельный отрезок"><svg><use href="#g-par"/></svg></button><button aria-label="Скругление"><svg><use href="#g-arc"/></svg></button><button aria-label="Фаска"><svg><use href="#g-cham"/></svg></button><button aria-label="Линия"><svg><use href="#g-line"/></svg></button><button aria-label="Окружность"><svg><use href="#g-circ"/></svg></button><button aria-label="Сплайн"><svg><use href="#g-spl"/></svg></button><button aria-label="Эквидистанта"><svg><use href="#g-loop"/></svg></button><button aria-label="Прямоугольник"><svg><use href="#g-rect"/></svg></button></div><button class="vmore" aria-label="Другие кнопки"><svg><use href="#overh"/></svg></button></div>
<div class="vbar"><i class="vgrip"></i><div class="set"><button aria-label="Контур"><svg><use href="#g-gear"/></svg></button><button aria-label="Сдвиг"><svg><use href="#g-sq2"/></svg></button><button aria-label="Симметрия"><svg><use href="#g-mir"/></svg></button><button aria-label="Копия"><svg><use href="#g-blk"/></svg></button><button aria-label="Поворот"><svg><use href="#g-rot"/></svg></button><button aria-label="Центр"><svg><use href="#g-targ"/></svg></button><button aria-label="Усечь"><svg><use href="#g-bolt"/></svg></button></div><button class="vmore" aria-label="Другие кнопки"><svg><use href="#overh"/></svg></button></div>
<div class="vbar"><i class="vgrip"></i><div class="set"><button aria-label="Спроецировать"><svg><use href="#g-cube"/></svg></button><button aria-label="Повернуть тело"><svg><use href="#g-rcube"/></svg></button></div><button class="vmore" aria-label="Другие кнопки"><svg><use href="#overh"/></svg></button></div>
</div>
<div class="vcol">
<div class="vbar"><i class="vgrip"></i><span class="vtext">В текущем виде</span><div class="set"><button aria-label="Параметризация"><svg><use href="#g-fx"/></svg></button><button aria-label="Касание"><svg><use href="#g-tan"/></svg></button></div><button class="vmore" aria-label="Другие кнопки"><svg><use href="#overh"/></svg></button></div>
<div class="vbar"><i class="vgrip"></i><div class="set"><button aria-label="База"><svg><use href="#g-base"/></svg></button><button aria-label="Вид"><svg><use href="#g-view"/></svg></button><button aria-label="Выноска"><svg><use href="#g-lead"/></svg></button><button aria-label="Угол"><svg><use href="#g-tri"/></svg></button><button aria-label="Шероховатость"><svg><use href="#g-chk"/></svg></button><button aria-label="Клеймо"><svg><use href="#g-stamp"/></svg></button><button aria-label="Допуск"><svg><use href="#g-flag"/></svg></button><button aria-label="Обозначение базы"><svg><use href="#g-abox"/></svg></button><button aria-label="Линия разреза"><svg><use href="#g-a"/></svg></button><button aria-label="Стрелка взгляда"><svg><use href="#g-aa"/></svg></button><button aria-label="Угловой размер"><svg><use href="#g-ang"/></svg></button><button aria-label="Авторазмер"><svg><use href="#g-dim"/></svg></button><button aria-label="Линейный размер"><svg><use href="#g-lin"/></svg></button><button aria-label="Радиус"><svg><use href="#g-rad"/></svg></button><button aria-label="Текст"><svg><use href="#g-t"/></svg></button><button aria-label="Таблица"><svg><use href="#g-tab"/></svg></button></div><button class="vmore" aria-label="Другие кнопки"><svg><use href="#overh"/></svg></button></div>
</div>
</aside>
</main>
<footer class="status"><span>Щелкните левой кнопкой мыши на объекте для его выделения (вместе с Ctrl - добавить к выделенным)</span><span class="cell"></span></footer>
</body>
</html>
```
FILE: styles.css
```css
*{box-sizing:border-box}
body{margin:0;height:100vh;display:flex;flex-direction:column;background:#e0e4e7;color:#222;font:7px/12px "Open Sans","Noto Sans",sans-serif;overflow:hidden}
.sprite{position:absolute;width:0;height:0}
button{border:0;padding:0;margin:0;background:none;font:inherit;color:inherit;display:flex;align-items:center;justify-content:center}
svg{display:block;width:12px;height:12px;flex:none}
i{flex:none}
.top{border-top:1px solid #55565a;padding-bottom:1px}
.menu{display:flex;gap:10px;height:15px;align-items:center;padding:1px 0 0 9px}
.menu a{color:#333;text-decoration:none}
.menu u{text-underline-offset:1px}
.row{display:flex;height:17px;padding-left:2px;gap:1px;align-items:center}
.row+.row{margin-top:1px}
.bar{display:flex;align-items:center;height:16px;border-radius:2px;background:linear-gradient(#fff,#fbfbfc 60%,#e6e9ec)}
.bar button,.treetools button{width:15px;height:14px;flex:none}
.bar .slim{width:14px}
.bar .wide{width:18px}
.bar .dd,.treetools .dd{width:7px}
.dd svg{width:6px}
.pale{opacity:.5}
.grip{width:4px;height:10px;background:radial-gradient(circle,#a8abb0 1px,transparent 1px) 0 0/3px 3px repeat-y}
.sep{width:6px;height:10px;background:linear-gradient(#b8babd,#b8babd) center/1px 100% no-repeat}
.bar .more{width:7px;height:16px;background:linear-gradient(#d5d8db,#8b8f96);border-radius:0 3px 3px 0}
.bar .gapl{margin-left:2px}
.more svg{width:6px;height:16px}
.bar .fx{color:#26337a;font-size:8px}
.bar .on,.treetools .on,.leftbar .on{background:#fbd671;border:1px solid #d6a544;border-radius:2px}
.pair{display:flex;height:14px;align-items:center}
.pair button{height:12px}
.combo{position:relative;display:block;height:13px}
.combo select{appearance:none;width:100%;height:13px;border:1px solid #a0a3a7;border-radius:0;background:#fff;font:7px/11px "DejaVu Sans Condensed","DejaVu Sans",sans-serif;padding:0 0 0 4px;color:#222;display:block}
.combo svg{position:absolute;right:1px;top:1px;width:10px;height:11px;background:#dfe1e4;border:1px solid #a0a3a7;pointer-events:none}
.zoomc{width:44px}.stepc{width:41px}.layerc{width:84px}.partc{width:86px}
.work{flex:1;min-height:0;display:flex;align-items:stretch}
.leftcol{width:16px;padding-top:2px;flex:none}
.vbar{width:15px;background:linear-gradient(90deg,#fdfdfe,#fff 70%,#cdd1d8);border-radius:2px;display:flex;flex-direction:column;align-items:center}
.vbar button{width:15px;height:15px;flex:none}
.leftbar .tight button{height:11px}
.leftbar .tight svg{width:10px;height:10px}
.leftbar .tight .on{height:13px;width:12px;margin:0 auto}
.leftbar{width:14px}
.leftbar .vmore{width:14px}
.vgrip{width:10px;height:6px;background:radial-gradient(circle,#a8abb0 1px,transparent 1px) 0 center/3px 3px repeat-x}
.hsep{width:9px;height:6px;background:linear-gradient(#b8babd,#b8babd) center/100% 1px no-repeat}
.vbar .vmore{height:8px;background:linear-gradient(90deg,#8b8f96,#e6e8ec);border-radius:0 0 2px 2px}
.vmore svg{width:14px;height:8px}
.set svg{fill:none;stroke:#a2a4a7}
.set button:nth-child(4n){height:14px}
.docs{flex:1;min-width:0;display:flex;flex-direction:column}
.tabs{display:flex;height:15px;background:linear-gradient(#f1f2f5,#fff);border-right:1px solid #c5c9cc;border-top:1px solid #c5c9cc;padding-top:1px}
.tab{gap:9px;background:linear-gradient(#fff0a8,#ffdf70);justify-content:flex-start;white-space:nowrap;font-family:"DejaVu Sans Condensed","DejaVu Sans",sans-serif}
.t1{width:110px;padding-left:16px;clip-path:polygon(0 100%,15px 0,100% 0,100% 100%);border-right:1px solid #b09040}
.t2{width:75px;padding-left:4px;gap:7px}
.t3{margin-left:-12px;width:130px;padding-left:14px;gap:7px;font-weight:700;background:linear-gradient(#dcebc8,#bcd59b);clip-path:polygon(0 100%,13px 0,100% 0,100% 100%);border-right:1px solid #8d9a78}
.x{width:8px;height:8px}
.list{margin-left:auto;width:14px}
.list svg{width:6px;height:4px}
.frame{flex:1;min-height:0;display:flex;border:1px solid #b3c690;border-top:2px solid #8c9878;border-bottom:2px solid #c5d6a0;border-right:2px solid #d6dfb5}
.treepanel{width:138px;flex:none;display:flex;flex-direction:column;padding:0 4px 0 1px;background:#e0e4e7;border-right:1px solid #999}
.title{margin:0;height:12px;flex:none;display:flex;align-items:center;gap:3px;padding:0 2px;background:#bfcddb;font-size:7px;font-weight:400;color:#3d5163}
.title span{flex:1}
.title svg{width:8px;height:8px}
.treetools{display:flex;align-items:center;height:18px;margin:0;background:linear-gradient(#fafbfb,#e6e9ec);flex:none}
.treebox{flex:1;min-height:0;display:flex;flex-direction:column;background:#fff;border:1px solid #999;margin:1px 1px 0 2px;overflow:hidden}
.tree,.tree ul{list-style:none;margin:0;padding:0}
.tree{padding:1px 0 0 3px;font:7px/13px "DejaVu Sans Condensed","DejaVu Sans",sans-serif;white-space:nowrap}
.tree svg{display:inline-block;vertical-align:middle;margin-right:5px;width:11px;height:11px}
.tree li{position:relative}
.tree ul>li{padding-left:15px;min-height:13px}
.tree ul>li:nth-child(3n){line-height:14px}
.tree ul ul>li{padding-left:16px}
.tree ul>li::before{content:"";position:absolute;left:6px;top:0;width:8px;height:7px;border-left:1px dotted #aaa;border-bottom:1px dotted #aaa}
.tree ul>li:not(:last-child)::after{content:"";position:absolute;left:6px;top:6px;bottom:0;border-left:1px dotted #aaa}
.tree ul>.open::before{left:3px;top:4px;width:7px;height:7px;border:1px solid #aaa;background:linear-gradient(#777,#777) center/3px 1px no-repeat #fff;z-index:1}
.tree mark{background:#eee;color:inherit;padding:1px 0}
.endbar{height:4px;flex:none;margin:-1px 6px 0 5px;border:1px solid #777;border-radius:2px;background:#eee;position:relative}
.scroll{margin-top:auto;height:11px;flex:none;display:flex;align-items:center;gap:6px;padding:0 4px;background:#efefef}
.scroll svg{width:3px;height:5px}
.track{flex:1;height:10px}
.thumb{width:78px;height:10px;border:1px solid #a5a7aa;border-radius:1px;background:repeating-linear-gradient(90deg,#777 0 1px,transparent 1px 2px) center/6px 4px no-repeat,linear-gradient(#f6f6f6,#cfd0d2)}
.lower{height:164px;flex:none;margin:1px 1px 0 2px;background:#fff;border:1px solid #999}
.btabs{display:flex;height:14px;flex:none;gap:8px;padding:0 2px 2px;border-top:1px solid #aaa}
.btabs button{white-space:nowrap}
.btabs .cur{background:#fff;border:1px solid #bbb;border-top:0;padding:0 2px;margin-right:-3px}
.view{flex:1;min-width:0;display:flex;background:linear-gradient(#6aa6e3 0,#a9cdf0 42%,#d5e6f7 75%,#fff 100%)}
.model{width:100%;height:100%;flex:1}
.model text{font-family:"Liberation Sans",sans-serif;font-size:9px}
.props{width:128px;margin:1px 0 1px 3px;flex:none;display:flex;flex-direction:column}
.props .title{margin-right:1px}
.propbody{flex:1;margin-top:16px;border:1px solid #c4c7ca;border-width:0 2px 1px;background:linear-gradient(90deg,#fff 20%,#e4e8ed)}
.rights{display:flex;gap:3px;flex:none;padding:1px 1px 0 1px}
.vcol{display:flex;flex-direction:column;gap:2px}
.vcol:first-child{padding-top:1px}
.vtext{writing-mode:vertical-rl;color:#999;padding:4px 0;font:8px/12px Roboto,"Open Sans",sans-serif;white-space:nowrap}
.status{height:12px;flex:none;display:flex;align-items:center;justify-content:space-between;padding:0 0 0 2px;border-top:1px solid #aaadb0;background:linear-gradient(#dcdfe2,#c8ccd0);color:#222;white-space:nowrap}
.cell{width:58px;height:11px;border-left:1px solid #999;border-right:1px solid #999}
```
